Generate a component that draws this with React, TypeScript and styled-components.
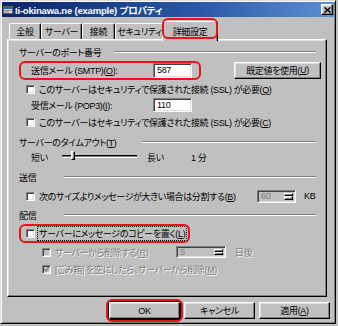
import React from 'react';
import styled, { createGlobalStyle, css } from 'styled-components';

const GlobalStyle = createGlobalStyle`
  html, body {
    margin: 0;
    padding: 0;
    background: #c0c0c0;
  }
  body {
    font-family: "Liberation Sans", "Noto Sans CJK JP", sans-serif;
    font-size: 9px;
    letter-spacing: -0.35px;
    font-feature-settings: "palt" 1;
    color: #000;
  }
`;

const raised = css`
  border: 1px solid;
  border-color: #fff #000 #000 #fff;
  box-shadow: inset -1px -1px #808080, inset 1px 1px #dfdfdf;
`;

const sunken = css`
  border: 1px solid;
  border-color: #808080 #fff #fff #808080;
  box-shadow: inset 1px 1px #404040, inset -1px -1px #dfdfdf;
`;

const Window = styled.div`
  box-sizing: border-box;
  width: 336px;
  height: 324px;
  background: #c0c0c0;
  border: 1px solid;
  border-color: #dfdfdf #000 #000 #dfdfdf;
  box-shadow: inset 1px 1px #fff, inset -1px -1px #808080;
  padding: 1px;
  display: flex;
  flex-direction: column;
`;

const TitleBar = styled.div`
  height: 15px;
  flex: none;
  display: flex;
  align-items: center;
  gap: 2px;
  padding: 0 1px 0 1px;
  background: linear-gradient(to right, #0a246a 0%, #2a5aa8 60%, #5d8fd4 100%);
`;

const TitleText = styled.span`
  flex: 1;
  color: #fff;
  font-weight: bold;
  font-size: 9.5px;
  letter-spacing: -0.2px;
  white-space: nowrap;
`;

const CloseButton = styled.div`
  ${raised};
  box-sizing: border-box;
  width: 12px;
  height: 11px;
  background: #c0c0c0;
  display: flex;
  align-items: center;
  justify-content: center;
`;

const Body = styled.div`
  flex: 1;
  display: flex;
  flex-direction: column;
  padding: 4px 4px 0 5px;
`;

const TabStrip = styled.div`
  display: flex;
  align-items: flex-end;
  height: 18px;
  padding-left: 2px;
  position: relative;
  z-index: 1;
`;

const Tab = styled.div<{ $w: number; $active?: boolean }>`
  box-sizing: border-box;
  width: ${p => p.$w}px;
  height: ${p => (p.$active ? 20 : 16)}px;
  margin: ${p => (p.$active ? '0 -2px -2px -2px' : '0')};
  background: #c0c0c0;
  border-top: 1px solid #fff;
  border-left: 1px solid #fff;
  border-right: 1px solid #000;
  border-radius: 2px 2px 0 0;
  box-shadow: inset -1px 0 #808080;
  display: flex;
  align-items: ${p => (p.$active ? 'flex-start' : 'center')};
  padding-top: ${p => (p.$active ? 3 : 0)}px;
  justify-content: center;
  white-space: nowrap;
`;

const Panel = styled.div`
  ${raised};
  box-sizing: border-box;
  width: 320px;
  height: 258px;
  padding: 5px 5px 0 11px;
  display: flex;
  flex-direction: column;
`;

const GroupTitle = styled.div<{ $mt: number }>`
  display: flex;
  align-items: center;
  height: 14px;
  margin-top: ${p => p.$mt}px;
`;

const GroupText = styled.span<{ $w: number }>`
  width: ${p => p.$w}px;
  white-space: nowrap;
`;

const Rule = styled.div`
  flex: 1;
  height: 0;
  margin-right: 5px;
  border-top: 1px solid #808080;
  border-bottom: 1px solid #fff;
`;

const Row = styled.div<{ $mt: number; $h: number; $indent: number }>`
  display: flex;
  align-items: center;
  height: ${p => p.$h}px;
  margin-top: ${p => p.$mt}px;
  padding-left: ${p => p.$indent}px;
  white-space: nowrap;
`;

const Marked = styled.div<{ $inset: string }>`
  position: relative;
  display: flex;
  align-items: center;
  &::after {
    content: '';
    position: absolute;
    inset: ${p => p.$inset};
    border: 2px solid #e8141b;
    border-radius: 6px;
    pointer-events: none;
  }
`;

const FieldLabel = styled.span<{ $w: number; $disabled?: boolean }>`
  width: ${p => p.$w}px;
  flex: none;
  white-space: nowrap;
  ${p =>
    p.$disabled &&
    css`
      color: #808080;
      text-shadow: 1px 1px #fff;
    `}
`;

const TextBox = styled.div<{ $w: number; $h: number; $disabled?: boolean }>`
  ${sunken};
  box-sizing: border-box;
  width: ${p => p.$w}px;
  height: ${p => p.$h}px;
  background: ${p => (p.$disabled ? '#c0c0c0' : '#fff')};
  color: ${p => (p.$disabled ? '#808080' : '#000')};
  display: flex;
  align-items: center;
  padding-left: 3px;
  flex: none;
  font-size: 9px;
  position: relative;
`;

const SpinButtons = styled.div`
  position: absolute;
  right: 2px;
  top: 2px;
  bottom: 2px;
  width: 9px;
  display: flex;
  flex-direction: column;
`;

const SpinHalf = styled.div`
  flex: 1;
  ${raised};
  box-sizing: border-box;
  background: #c0c0c0;
`;

const PushButton = styled.div<{ $w: number; $default?: boolean }>`
  ${raised};
  box-sizing: border-box;
  width: ${p => p.$w}px;
  height: 17px;
  background: #c0c0c0;
  display: flex;
  align-items: center;
  justify-content: center;
  flex: none;
  white-space: nowrap;
  ${p =>
    p.$default &&
    css`
      outline: 1px solid #000;
      outline-offset: 0;
    `}
`;

const Box = styled.div<{ $disabled?: boolean }>`
  ${sunken};
  box-sizing: border-box;
  width: 9px;
  height: 9px;
  flex: none;
  margin-right: 4px;
  background: ${p => (p.$disabled ? '#c0c0c0' : '#fff')};
  display: flex;
  align-items: center;
  justify-content: center;
`;

const CheckText = styled.span<{ $disabled?: boolean; $focus?: boolean; $w?: number }>`
  white-space: nowrap;
  ${p => p.$w && css`width: ${p.$w}px; flex: none;`}
  ${p =>
    p.$disabled &&
    css`
      color: #808080;
      text-shadow: 1px 1px #fff;
    `}
  ${p =>
    p.$focus &&
    css`
      outline: 1px dotted #000;
      outline-offset: 0;
      padding: 0 1px;
      margin-left: -1px;
    `}
`;

const SliderRow = styled.div`
  display: flex;
  align-items: center;
  height: 16px;
  padding-left: 12px;
`;

const Track = styled.div`
  position: relative;
  width: 75px;
  height: 0;
  border-top: 1px solid #808080;
  border-bottom: 1px solid #fff;
  box-shadow: 0 -1px #000;
  margin-right: 10px;
`;

const Thumb = styled.div`
  ${raised};
  position: absolute;
  left: 9px;
  top: -6px;
  width: 4px;
  height: 9px;
  background: #c0c0c0;
  box-sizing: border-box;
`;

const ButtonRow = styled.div`
  display: flex;
  justify-content: flex-end;
  gap: 4px;
  margin-top: 5px;
`;

const Check: React.FC<{ checked?: boolean; disabled?: boolean }> = ({ checked, disabled }) => (
  <Box $disabled={disabled}>
    {checked && (
      <svg width="7" height="7" viewBox="0 0 7 7">
        <path d="M1 3 L3 5 L6 1" stroke={disabled ? '#808080' : '#000'} strokeWidth="1.4" fill="none" />
      </svg>
    )}
  </Box>
);

const Spin: React.FC<{ w: number; h: number; value: string }> = ({ w, h, value }) => (
  <TextBox $w={w} $h={h} $disabled>
    {value}
    <SpinButtons>
      <SpinHalf />
      <SpinHalf />
    </SpinButtons>
  </TextBox>
);

const App: React.FC = () => {
  return (
    <>
      <GlobalStyle />
      <Window>
        <TitleBar>
          <svg width="10" height="10" viewBox="0 0 10 10">
            <rect x="0.5" y="1.5" width="9" height="7" fill="#dcdcdc" stroke="#606060" />
            <rect x="1" y="2" width="8" height="2" fill="#2a5aa8" />
            <path d="M1.5 5.5 H8.5 M1.5 7 H6" stroke="#808080" />
          </svg>
          <TitleText>Ii-okinawa.ne (example) プロパティ</TitleText>
          <CloseButton>
            <svg width="7" height="6" viewBox="0 0 7 6">
              <path d="M0.5 0.5 L6.5 5.5 M6.5 0.5 L0.5 5.5" stroke="#000" strokeWidth="1.5" />
            </svg>
          </CloseButton>
        </TitleBar>

        <Body>
          <TabStrip>
            <Tab $w={32}>全般</Tab>
            <Tab $w={41}>サーバー</Tab>
            <Tab $w={33}>接続</Tab>
            <Tab $w={49}>セキュリティ</Tab>
            <Marked $inset="-3px -2px 0 -2px">
              <Tab $w={56} $active>詳細設定</Tab>
            </Marked>
          </TabStrip>

          <Panel>
            <GroupTitle $mt={0}>
              <GroupText $w={95}>サーバーのポート番号</GroupText>
              <Rule />
            </GroupTitle>

            <Row $mt={2} $h={18} $indent={0}>
              <Marked $inset="-2px -9px -2px 0" style={{ paddingLeft: 12 }}>
                <FieldLabel $w={122}>送信メール (SMTP)(<u>O</u>):</FieldLabel>
                <TextBox $w={39} $h={15}>587</TextBox>
              </Marked>
              <div style={{ width: 42 }} />
              <PushButton $w={87}>既定値を使用(<u>U</u>)</PushButton>
            </Row>

            <Row $mt={2} $h={16} $indent={7}>
              <Check />
              <CheckText>このサーバーはセキュリティで保護された接続 (SSL) が必要(<u>Q</u>)</CheckText>
            </Row>

            <Row $mt={0} $h={16} $indent={12}>
              <FieldLabel $w={122}>受信メール (POP3)(<u>I</u>):</FieldLabel>
              <TextBox $w={39} $h={14}>110</TextBox>
            </Row>

            <Row $mt={1} $h={16} $indent={7}>
              <Check />
              <CheckText>このサーバーはセキュリティで保護された接続 (SSL) が必要(<u>C</u>)</CheckText>
            </Row>

            <GroupTitle $mt={5}>
              <GroupText $w={123}>サーバーのタイムアウト(<u>T</u>)</GroupText>
              <Rule />
            </GroupTitle>

            <SliderRow>
              <FieldLabel $w={31}>短い</FieldLabel>
              <Track>
                <Thumb />
              </Track>
              <FieldLabel $w={44}>長い</FieldLabel>
              <span>1 分</span>
            </SliderRow>

            <GroupTitle $mt={5}>
              <GroupText $w={45}>送信</GroupText>
              <Rule />
            </GroupTitle>

            <Row $mt={4} $h={16} $indent={7}>
              <Check />
              <CheckText $w={218}>次のサイズよりメッセージが大きい場合は分割する(<u>B</u>)</CheckText>
              <Spin w={39} h={13} value="60" />
              <span style={{ marginLeft: 8 }}>KB</span>
            </Row>

            <GroupTitle $mt={4}>
              <GroupText $w={45}>配信</GroupText>
              <Rule />
            </GroupTitle>

            <Row $mt={2} $h={19} $indent={0}>
              <Marked $inset="0" style={{ padding: '0 4px 0 7px', height: 19 }}>
                <Check />
                <CheckText $focus>サーバーにメッセージのコピーを置く(<u>L</u>)</CheckText>
              </Marked>
            </Row>

            <Row $mt={1} $h={16} $indent={23}>
              <Check disabled />
              <CheckText $disabled $w={121}>サーバーから削除する(<u>R</u>)</CheckText>
              <Spin w={50} h={12} value="5" />
              <FieldLabel $w={30} $disabled style={{ marginLeft: 9 }}>日後</FieldLabel>
            </Row>

            <Row $mt={1} $h={16} $indent={23}>
              <Check checked disabled />
              <CheckText $disabled>[ごみ箱] を空にしたら、サーバーから削除(<u>M</u>)</CheckText>
            </Row>
          </Panel>

          <ButtonRow>
            <Marked $inset="-3px -3px -3px -3px">
              <PushButton $w={71} $default>OK</PushButton>
            </Marked>
            <PushButton $w={71}>キャンセル</PushButton>
            <PushButton $w={71}>適用(<u>A</u>)</PushButton>
          </ButtonRow>
        </Body>
      </Window>
    </>
  );
};

export default App;
